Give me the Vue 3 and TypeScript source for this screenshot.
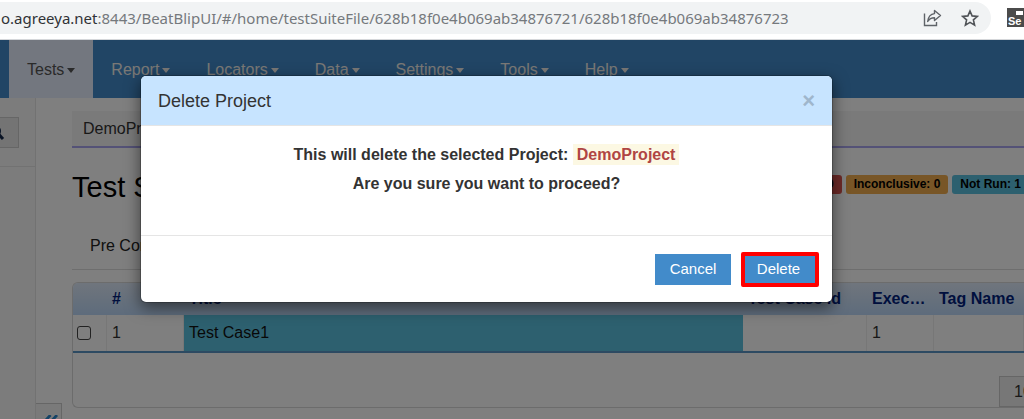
<script setup lang="ts">
import { ref } from 'vue'

interface Column { key: string; label: string }
interface Badge { text: string; tone: string }

const menu: string[] = ['Tests', 'Report', 'Locators', 'Data', 'Settings', 'Tools', 'Help']
const activeMenu = ref('Tests')
const columns: Column[] = [
  { key: 'pick', label: '' },
  { key: 'num', label: '#' },
  { key: 'title', label: 'Title' },
  { key: 'case', label: 'Test Case Id' },
  { key: 'exec', label: 'Execution' },
  { key: 'tag', label: 'Tag Name' },
]
const badges: Badge[] = [
  { text: 'Failed: 0', tone: 'red' },
  { text: 'Inconclusive: 0', tone: 'orange' },
  { text: 'Not Run: 1', tone: 'blue' },
]
const project = 'DemoProject'
const open = ref(true)
const checked = ref(false)
const address = ref(':8443/BeatBlipUI/#/home/testSuiteFile/628b18f0e4b069ab34876721/628b18f0e4b069ab34876723')
</script>

<template>
  <div class="window">
    <header class="browser">
      <div class="omnibox">
        <span class="url"><span class="host">o.agreeya.net</span>{{ address }}</span>
        <button class="icon" aria-label="Share">
          <svg width="20" height="18" viewBox="0 0 20 18" fill="none" stroke="#5f6368" stroke-width="1.4">
            <path d="M2.500 4.500v12h12V13" />
            <path d="M12.500 1.500l6 5-6 5V8.800C9.500 8.800 7.300 9.800 5.700 12.500 6.200 8 8.500 5 12.500 4.600z" stroke-linejoin="round" />
          </svg>
        </button>
        <button class="icon star" aria-label="Bookmark">
          <svg width="18" height="18" viewBox="0 0 18 18" fill="none" stroke="#505357" stroke-width="1.6">
            <path d="M9 2l2.100 4.900 5.300.5-4 3.500 1.200 5.200L9 13.400l-4.600 2.700 1.200-5.200-4-3.500 5.300-.5z" />
          </svg>
        </button>
      </div>
      <button class="extension" aria-label="Selenium"><i></i><span>Se</span></button>
    </header>

    <div class="app">
      <nav class="menu">
        <a v-for="item in menu" :key="item" href="#" :class="{ active: item === activeMenu }" @click.prevent="activeMenu = item">{{ item }}<i class="caret"></i></a>
      </nav>

      <div class="columns">
        <aside class="side">
          <div class="search">
            <button aria-label="Search">
              <svg width="16" height="16" viewBox="0 0 16 16" fill="none" stroke="#14284b">
                <circle cx="6" cy="6" r="5" stroke-width="2" />
                <path d="M10 9.500l4 4.500" stroke-width="3" />
              </svg>
            </button>
          </div>
        </aside>
        <main class="content">
          <div class="crumb">{{ project }}</div>
          <div class="heading">
            <h1>Test Suite</h1>
            <div class="badges">
              <span v-for="b in badges" :key="b.text" :class="['badge', b.tone]">{{ b.text }}</span>
            </div>
          </div>
          <div class="tabs"><a href="#">Pre Condition</a></div>
          <section class="panel">
            <table>
              <colgroup><col v-for="c in columns" :key="c.key" :class="c.key" /></colgroup>
              <thead>
                <tr><th v-for="c in columns" :key="c.key">{{ c.label }}</th></tr>
              </thead>
              <tbody>
                <tr>
                  <td class="tick"><input v-model="checked" type="checkbox" aria-label="Select Test Case1" /></td>
                  <td>1</td>
                  <td class="name">Test Case1</td>
                  <td></td>
                  <td>1</td>
                  <td></td>
                </tr>
              </tbody>
            </table>
            <div class="pager"><button>10</button></div>
          </section>
          <button class="collapse" aria-label="Collapse sidebar">
            <svg width="14" height="12" viewBox="0 0 14 12" fill="none" stroke="#2a86cc" stroke-width="2.800">
              <path d="M6.500 0L1.500 5.500 6.500 11M13 0L8 5.500l5 5.500" />
            </svg>
          </button>
        </main>
      </div>

      <div v-if="open" class="backdrop">
        <div class="modal" role="dialog" aria-modal="true" aria-labelledby="dialog-title">
          <div class="modal-head">
            <h2 id="dialog-title">Delete Project</h2>
            <button class="close" aria-label="Close" @click="open = false">×</button>
          </div>
          <div class="modal-body">
            <p>This will delete the selected Project: <mark>{{ project }}</mark></p>
            <p>Are you sure you want to proceed?</p>
          </div>
          <div class="modal-foot">
            <button class="btn" @click="open = false">Cancel</button>
            <button class="btn danger" @click="open = false">Delete</button>
          </div>
        </div>
      </div>
    </div>
  </div>
</template>

<style>
body { overflow: hidden; }
</style>

<style scoped>
* { box-sizing: border-box; }
.window { display: flex; flex-direction: column; height: 100vh; font: 16px/20px "Liberation Sans", Arial, sans-serif; color: #333; overflow: hidden; background: #fff; }
button { font: inherit; border: 0; padding: 0; background: none; cursor: pointer; }
a { color: inherit; text-decoration: none; }

.browser { flex: none; display: flex; align-items: flex-start; height: 40px; padding-top: 2px; border-bottom: 1px solid #d5d7da; overflow: hidden; }
.omnibox { flex: 1; min-width: 0; display: flex; align-items: center; height: 32px; padding: 0 12px 0 1px; background: #f1f3f4; border-radius: 0 16px 16px 0; }
.url { flex: 1; min-width: 0; white-space: nowrap; overflow: hidden; font: 15px/24px "Noto Sans", "Open Sans", sans-serif; color: #75797d; }
.host { color: #303236; }
.icon { display: flex; }
.star { margin-left: 19px; }
.extension { flex: none; position: relative; width: 17px; height: 19px; margin: 6px 0 0 16px; background: #4b4b4b; color: #fff; font-size: 11px; font-weight: bold; line-height: 12px; text-align: left; overflow: hidden; padding: 7px 0 0 1px; }
.extension i { position: absolute; top: 3px; right: 1px; width: 7px; height: 4px; background: #fff; }

.app { position: relative; flex: 1; min-height: 0; display: flex; flex-direction: column; overflow: hidden; }
.menu { flex: none; display: flex; height: 58px; padding-left: 9px; background: #428bca; color: #f4f0ec; }
.menu a { display: flex; align-items: center; padding: 2px 18px 0; }
.menu .active { background: #e7efff; color: #555; }
.caret { margin-left: 3px; border: 4px solid transparent; border-top: 5px solid currentColor; border-bottom: 0; }

.columns { flex: 1; display: flex; min-height: 0; }
.side { flex: none; width: 36px; background: #f8f8f8; border-right: 1px solid #e4e4e4; }
.search { display: flex; height: 69px; padding-top: 19px; border-bottom: 1px solid #e4e4e4; }
.search button { display: flex; align-items: center; width: 19px; height: 31px; background: #e9e9e9; border: 1px solid #ccc; border-left: 0; overflow: hidden; justify-content: flex-end; padding-right: 13px; }
.search svg { flex: none; }
.content { position: relative; flex: 1; min-width: 0; padding: 13px 0 0 36px; }
.crumb { height: 37px; padding: 8px 11px; background: #f5f5f5; border-bottom: 2px solid #a9a4ee; }
.heading { display: flex; align-items: center; justify-content: space-between; height: 72px; color: #000; }
h1 { margin: 0; padding-top: 6px; font-size: 29px; line-height: 32px; font-weight: normal; }
.badges { display: flex; gap: 4px; }
.badge { padding: 0 8px; height: 19px; border-radius: 3px; font-size: 12px; line-height: 19px; font-weight: bold; color: #000; }
.red { background: #d9534f; }
.orange { background: #f0ad4e; }
.blue { background: #5bc0de; }
.blue:last-child { padding-right: 3px; border-radius: 3px 0 0 3px; }
.tabs { height: 50px; padding: 16px 18px; border-bottom: 1px solid #ddd; color: #222; }
.panel { margin-top: 12px; height: 126px; border: 1px solid #d8d8d8; border-right: 0; border-radius: 6px 0 0 6px; overflow: hidden; display: flex; flex-direction: column; }
table { width: 100%; table-layout: fixed; border-collapse: separate; border-spacing: 0; border-bottom: 2px solid #5b95c5; }
.pick { width: 34px; }
.num { width: 77px; }
.title { width: 559px; }
.case { width: 124px; }
.exec { width: 67px; }
thead tr { background: linear-gradient(#e0ebfa, #bcd8f8); }
th { height: 32px; padding: 0 5px; text-align: left; color: #00207c; overflow: hidden; text-overflow: ellipsis; white-space: nowrap; }
td { height: 36px; padding: 0 5px; border-right: 1px solid #eee; }
.name { background: #5bc0de; color: #111; border-right: 0; }
.tick { padding: 0 4px; }
.tick input { display: block; appearance: none; width: 14px; height: 14px; margin: 0; border: 1px solid #444; border-radius: 3px; }
.pager { flex: 1; display: flex; justify-content: flex-end; align-items: flex-end; overflow: hidden; }
.pager button { width: 25px; height: 31px; padding-left: 14px; background: #eee; border: 1px solid #ccc; border-right: 0; text-align: left; white-space: nowrap; color: #333; }
.collapse { position: absolute; left: 0; bottom: 0; display: flex; align-items: flex-start; width: 26px; height: 16px; border: 1px solid #ccc; border-left: 0; border-bottom: 0; background: #f5f5f5; padding: 11px 0 0 8px; overflow: hidden; }
.collapse svg { flex: none; }

.backdrop { position: absolute; inset: 0; padding: 35px 191px 0 140px; background: rgba(0, 0, 0, 0.5); }
.modal { background: #fff; border: 1px solid rgba(0, 0, 0, 0.2); background-clip: padding-box; border-radius: 6px; box-shadow: 0 5px 15px rgba(0, 0, 0, 0.5); overflow: hidden; }
.modal-head { display: flex; align-items: center; justify-content: space-between; height: 50px; padding: 0 17px; background: #c7e4ff; border-bottom: 1px solid #e5e5e5; }
h2 { margin: 0; font-size: 18px; line-height: 26px; font-weight: normal; }
.close { height: 30px; font-size: 22px; line-height: 20px; font-weight: bold; color: #9fb6cc; }
.modal-body { height: 109px; padding: 14px 17px; text-align: center; font-weight: bold; }
p { margin: 0; line-height: 29px; }
mark { padding: 2px 4px; background: #fcf8e3; color: #b04543; }
.modal-foot { display: flex; justify-content: flex-end; align-items: center; gap: 10px; height: 67px; padding: 0 13px; border-top: 1px solid #e5e5e5; }
.btn { width: 76px; height: 31px; background: #428bca; color: #fff; font-size: 15px; line-height: 20px; }
.danger { width: 78px; height: 35px; padding-right: 3px; border: 4px solid #f00; border-radius: 2px; }
</style>
